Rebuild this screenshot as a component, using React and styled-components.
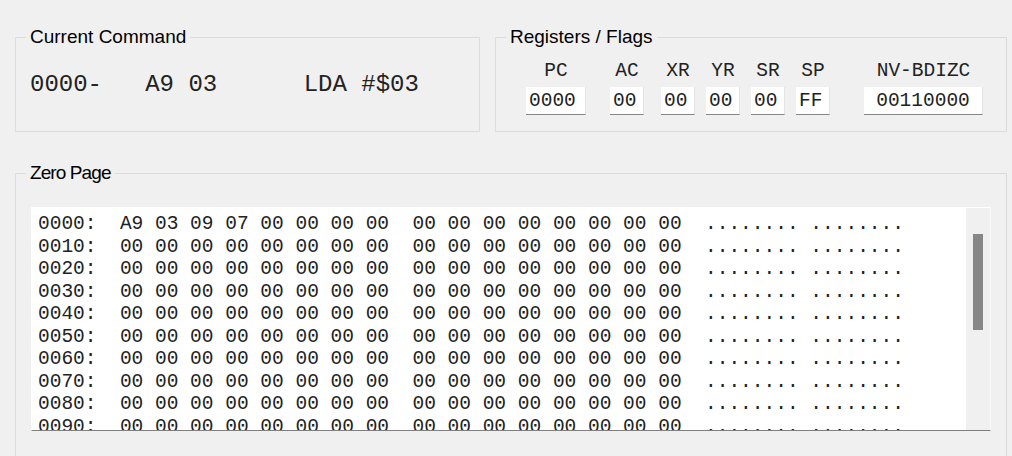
import React from 'react';
import styled, { createGlobalStyle } from 'styled-components';

const GlobalStyle = createGlobalStyle`
  html, body {
    margin: 0;
    padding: 0;
    background: #f0f0f0;
    overflow: hidden;
  }
`;

const Page = styled.div`
  width: 1012px;
  height: 456px;
  background: #f0f0f0;
  padding: 26px 0 0 15px;
  box-sizing: border-box;
  overflow: hidden;
`;

const TopRow = styled.div`
  display: flex;
  gap: 15px;
`;

const Group = styled.fieldset`
  margin: 0;
  padding: 0;
  min-width: 0;
  width: ${(p) => p.$width}px;
  box-sizing: border-box;
  border: 1px solid #dcdcdc;
`;

const Legend = styled.legend`
  margin-left: 10px;
  padding: 0 4px;
  font-family: 'Liberation Sans', Arial, sans-serif;
  font-size: 19px;
  line-height: 22px;
  letter-spacing: ${(p) => (p.$tight ? '-0.9px' : '0')};
  color: #000;
`;

const CommandBody = styled.div`
  height: 83px;
  box-sizing: border-box;
  padding: 23px 0 0 14px;
  font-family: 'Liberation Mono', 'Courier New', monospace;
  font-size: 24px;
  line-height: 28px;
  white-space: pre;
  color: #222;
`;

const RegBody = styled.div`
  height: 83px;
  box-sizing: border-box;
  padding: 12px 0 0 30px;
  display: flex;
  align-items: flex-start;
`;

const RegColumn = styled.div`
  display: flex;
  flex-direction: column;
  align-items: center;
  gap: 5px;
  margin-left: ${(p) => p.$gap}px;
  width: ${(p) => p.$width}px;
`;

const RegLabel = styled.div`
  font-family: 'Liberation Mono', 'Courier New', monospace;
  font-size: 19.5px;
  line-height: 22px;
  color: #222;
  white-space: pre;
`;

const RegBox = styled.div`
  width: 100%;
  height: 28px;
  box-sizing: border-box;
  background: #fff;
  border-bottom: 1px solid #858585;
  border-right: 1px solid #e4e4e4;
  padding: 2px ${(p) => (p.$center ? 0 : 3)}px 0;
  text-align: ${(p) => (p.$center ? 'center' : 'left')};
  font-family: 'Liberation Mono', 'Courier New', monospace;
  font-size: 19.5px;
  line-height: 25px;
  color: #222;
  white-space: pre;
`;

const ZeroGroup = styled(Group)`
  margin-top: 30px;
`;

const ZeroBody = styled.div`
  padding: 23px 15px 30px 15px;
`;

const HexBox = styled.div`
  display: flex;
  height: 224px;
  box-sizing: border-box;
  background: #fff;
  border-top: 1px solid #fff;
  border-left: 1px solid #fff;
  border-right: 1px solid #f8f8f8;
  border-bottom: 1px solid #7f7f7f;
`;

const HexText = styled.div`
  flex: 1;
  overflow: hidden;
  padding: 5px 0 0 6px;
  font-family: 'Liberation Mono', 'Courier New', monospace;
  font-size: 19.5px;
  line-height: 22.5px;
  color: #222;
  white-space: pre;
`;

const ScrollTrack = styled.div`
  width: 24px;
  background: #f0f0f0;
  padding-top: 26px;
  box-sizing: border-box;
  display: flex;
  justify-content: center;
`;

const ScrollThumb = styled.div`
  width: 10px;
  height: 96px;
  background: #878787;
`;

const registers = [
  { name: 'PC', value: '0000', width: 60, gap: 0 },
  { name: 'AC', value: '00', width: 34, gap: 24 },
  { name: 'XR', value: '00', width: 34, gap: 17 },
  { name: 'YR', value: '00', width: 34, gap: 11 },
  { name: 'SR', value: '00', width: 34, gap: 11 },
  { name: 'SP', value: 'FF', width: 34, gap: 11 },
  { name: 'NV-BDIZC', value: '00110000', width: 119, gap: 34, center: true },
];

const hex = (n, w) => n.toString(16).toUpperCase().padStart(w, '0');

const memory = new Array(256).fill(0);
memory[0] = 0xa9;
memory[1] = 0x03;
memory[2] = 0x09;
memory[3] = 0x07;

const asc = (arr) =>
  arr.map((c) => (c >= 0x20 && c < 0x7f ? String.fromCharCode(c) : '.')).join('');

const rows = [];
for (let r = 0; r < 16; r++) {
  const bytes = memory.slice(r * 16, r * 16 + 16);
  const lo = bytes.slice(0, 8).map((b) => hex(b, 2)).join(' ');
  const hi = bytes.slice(8).map((b) => hex(b, 2)).join(' ');
  rows.push(
    `${hex(r * 16, 4)}:  ${lo}  ${hi}  ${asc(bytes.slice(0, 8))} ${asc(bytes.slice(8))}`
  );
}

export default function App() {
  return (
    <>
      <GlobalStyle />
      <Page>
        <TopRow>
          <Group $width={465}>
            <Legend>Current Command</Legend>
            <CommandBody>{'0000-   A9 03      LDA #$03'}</CommandBody>
          </Group>
          <Group $width={512}>
            <Legend>Registers / Flags</Legend>
            <RegBody>
              {registers.map((r) => (
                <RegColumn key={r.name} $width={r.width} $gap={r.gap}>
                  <RegLabel>{r.name}</RegLabel>
                  <RegBox $center={r.center}>{r.value}</RegBox>
                </RegColumn>
              ))}
            </RegBody>
          </Group>
        </TopRow>
        <ZeroGroup $width={992}>
          <Legend $tight>Zero Page</Legend>
          <ZeroBody>
            <HexBox>
              <HexText>{rows.join('\n')}</HexText>
              <ScrollTrack>
                <ScrollThumb />
              </ScrollTrack>
            </HexBox>
          </ZeroBody>
        </ZeroGroup>
      </Page>
    </>
  );
}
